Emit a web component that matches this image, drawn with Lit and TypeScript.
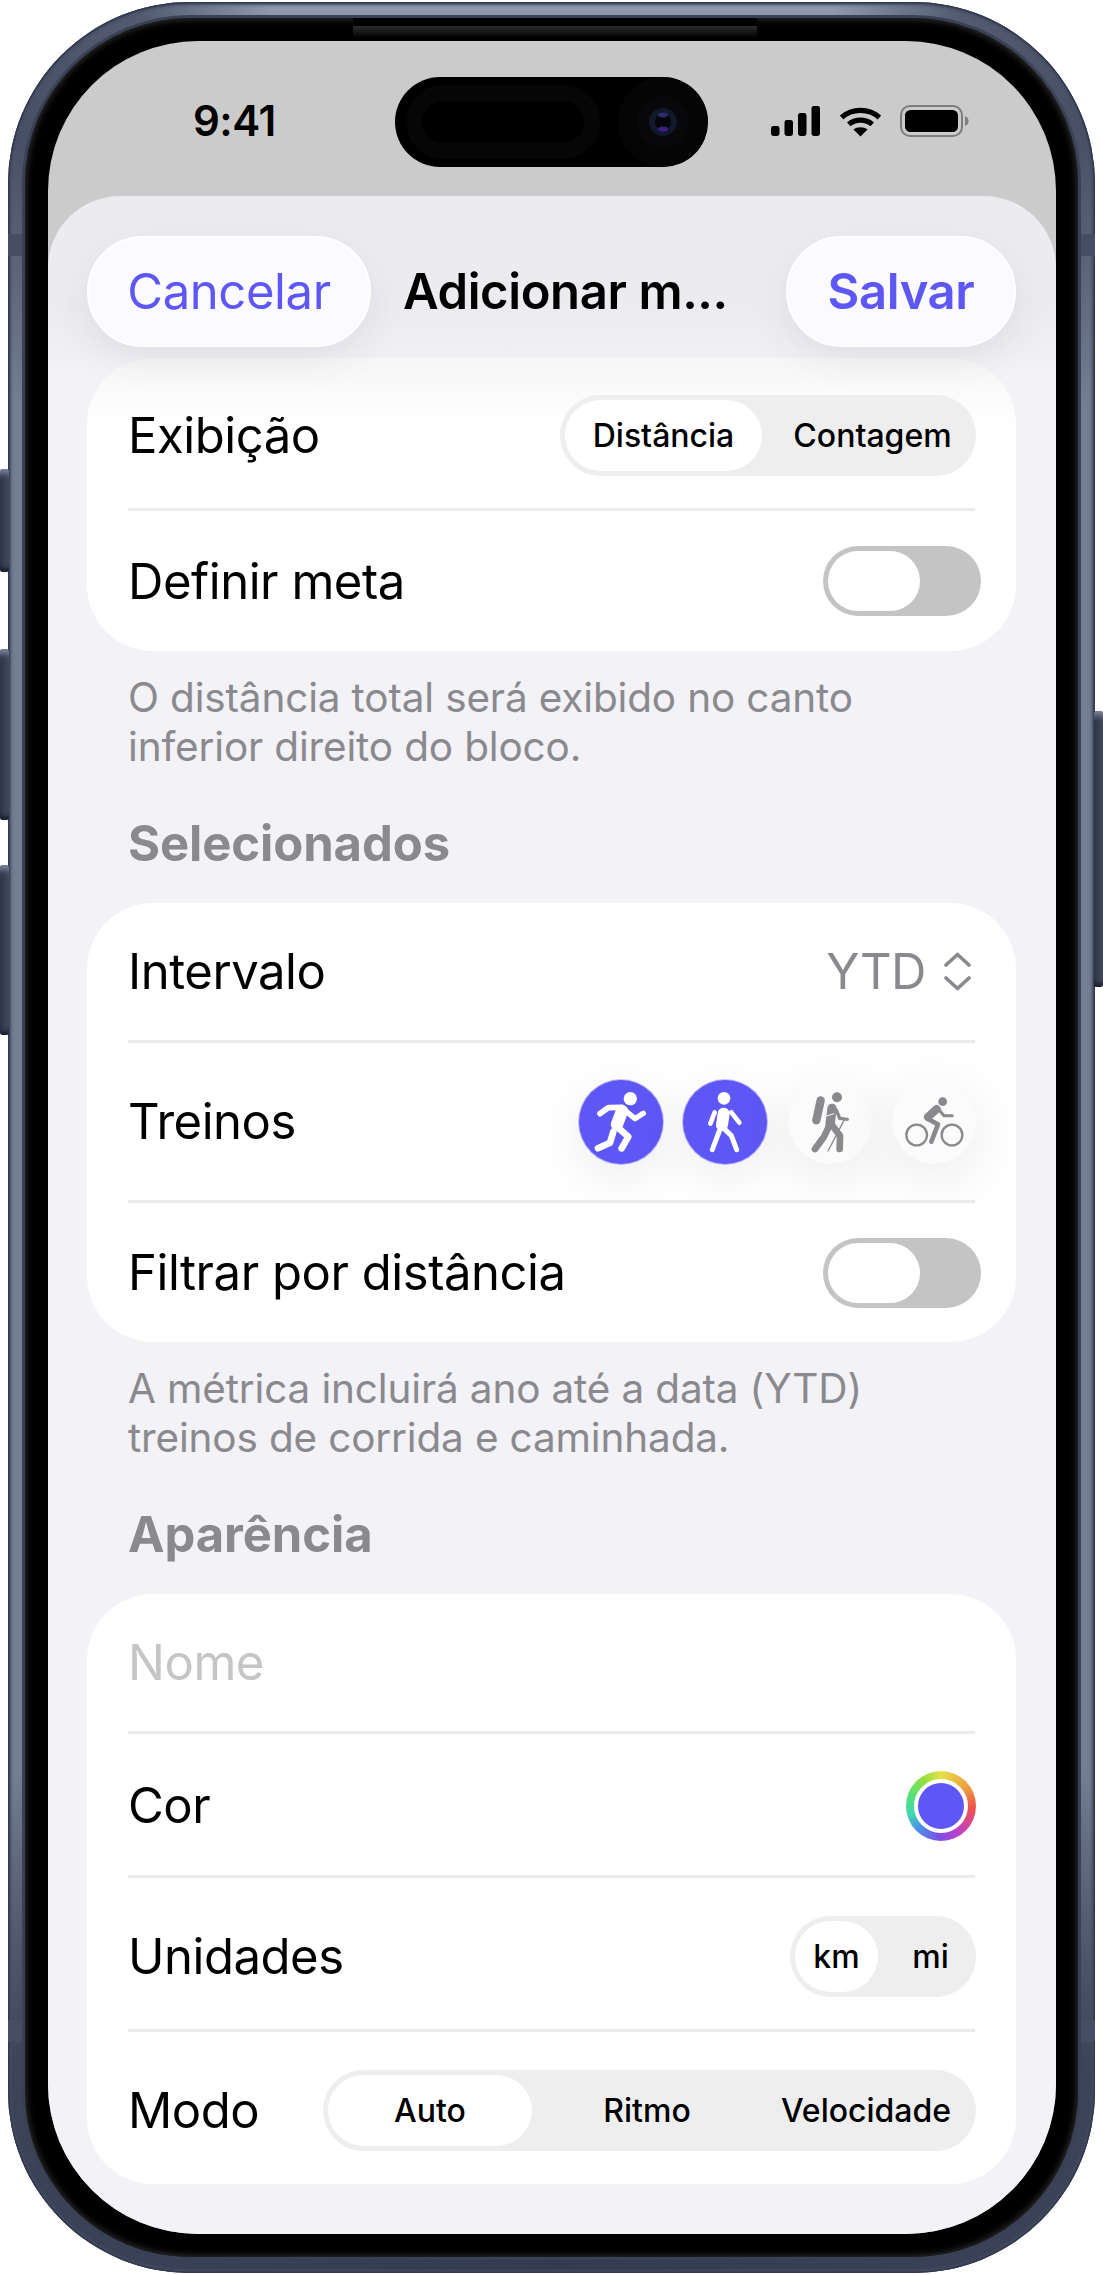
import { LitElement, html, css, svg } from "lit";
import { customElement } from "lit/decorators.js";

const runIcon = svg`<svg class="ic" viewBox="12 15 252 252"><g fill="none" stroke="#fff" stroke-linecap="round" stroke-linejoin="round">
<circle cx="166" cy="71" r="20" fill="#fff" stroke="none"/>
<path d="M141 108 L126 148" stroke-width="37"/>
<path d="M75 116 L100 98 L140 97" stroke-width="17"/>
<path d="M150 106 L180 131 L205 115" stroke-width="16"/>
<path d="M126 155 L160 185 L140 220" stroke-width="20"/>
<path d="M115 170 L105 203 L69 220" stroke-width="20"/></g></svg>`;

const walkIcon = svg`<svg class="ic" viewBox="325 15 252 252"><g fill="none" stroke="#fff" stroke-linecap="round" stroke-linejoin="round">
<circle cx="448" cy="70" r="19" fill="#fff" stroke="none"/>
<path d="M447 116 L442 150" stroke-width="36"/>
<path d="M420 112 L407 146" stroke-width="14"/>
<path d="M470 112 L494 143" stroke-width="14"/>
<path d="M434 168 L413 224" stroke-width="15"/>
<path d="M442 155 L470 182 L486 224" stroke-width="15"/></g></svg>`;

const hikeIcon = svg`<svg class="ic" viewBox="20 15 252 252"><g fill="none" stroke="#8a8a8e" stroke-linecap="round" stroke-linejoin="round">
<circle cx="167" cy="67" r="15" fill="#8a8a8e" stroke="none"/>
<path d="M118 76 L105 136" stroke-width="25"/>
<path d="M152 100 L146 150" stroke-width="28"/>
<path d="M165 105 L175 130 L198 133" stroke-width="10"/>
<path d="M188 136 L140 228" stroke-width="4"/>
<path d="M145 150 L128 185 L101 222" stroke-width="20"/>
<path d="M152 150 L176 182 L175 222" stroke-width="20"/>
<path d="M126 126 L158 116" stroke="#fafafa" stroke-width="3"/></g></svg>`;

const bikeIcon = svg`<svg class="ic" viewBox="334 15 252 252"><g fill="none" stroke="#8a8a8e" stroke-linecap="round" stroke-linejoin="round">
<circle cx="486" cy="80" r="13" fill="#8a8a8e" stroke="none"/>
<circle cx="408" cy="180" r="31" stroke-width="7"/>
<circle cx="514" cy="180" r="31" stroke-width="7"/>
<path d="M468 102 L442 126" stroke-width="24"/>
<path d="M475 104 L490 122 L515 122" stroke-width="9"/>
<path d="M442 132 L472 148 L452 200" stroke-width="14"/></g></svg>`;

const chevrons = svg`<svg class="chev" viewBox="0 0 27 39"><path d="M2 13 L13.5 2.5 L25 13 M2 26 L13.5 36.5 L25 26" fill="none" stroke="#8a8a8e" stroke-width="3.6" stroke-linecap="round" stroke-linejoin="round"/></svg>`;

const signal = svg`<svg class="sig" viewBox="0 0 49 30" fill="#000"><rect x="0" y="20" width="8.5" height="10" rx="2.4"/><rect x="13.5" y="14" width="8.5" height="16" rx="2.4"/><rect x="27" y="7" width="8.5" height="23" rx="2.4"/><rect x="40.5" y="0" width="8.5" height="30" rx="2.4"/></svg>`;
const wifi = svg`<svg class="wifi" viewBox="0 0 43 31" fill="none" stroke="#000" stroke-width="5.2"><path d="M2.6 11.5 C13 2 30 2 40.4 11.5"/><path d="M9.8 18.4 C16 12.6 27 12.6 33.2 18.4"/><path d="M21.5 30.5 L14.5 23.6 C18 20.4 25 20.4 28.5 23.6 Z" fill="#000" stroke="none"/></svg>`;
const battery = svg`<svg class="bat" viewBox="0 0 69 32"><rect x="1" y="1" width="61" height="30" rx="9" fill="none" stroke="#7c7c7c" stroke-width="2"/><rect x="5" y="5" width="53" height="22" rx="5.5" fill="#000"/><path d="M65 11 C67.5 12 68.5 14 68.5 16 C68.5 18 67.5 20 65 21 Z" fill="#7c7c7c"/></svg>`;
const island = svg`<svg class="cam" viewBox="0 0 313 90"><rect x="19" y="16" width="178" height="58" rx="29" fill="none" stroke="#060606" stroke-width="16"/><circle cx="268" cy="45" r="45" fill="#050505"/><circle cx="268" cy="45" r="26" fill="#08080a"/><circle cx="268" cy="45" r="14" fill="#10182a"/><circle cx="268" cy="45" r="8" fill="#05060a"/><ellipse cx="268" cy="38" rx="5" ry="2.4" fill="#2b2a6a"/><ellipse cx="268" cy="52" rx="5" ry="2.6" fill="#3a1e86"/></svg>`;

@customElement("app-root")
export class AppRoot extends LitElement {
  static styles = css`
    :host { display: block; width: 1103px; height: 2275px; background: #fff; font-family: Inter, "Liberation Sans", sans-serif; color: #000; overflow: hidden; }
    * { box-sizing: border-box; }
    .stage { padding: 2px 8px; height: 2275px; }
    .frame { position: relative; height: 2271px; border-radius: 182px; padding: 16px 17px; background: conic-gradient(#8e98ae 0deg, #8e98ae 14deg, #525b70 20deg, #485066 28deg, #737d94 36deg, #737d94 140deg, #3c4459 150deg, #343b50 180deg, #3c4459 210deg, #737d94 220deg, #737d94 324deg, #485066 332deg, #525b70 340deg, #8e98ae 346deg, #8e98ae 360deg); box-shadow: inset 0 0 0 1.5px #333a4d, inset 0 0 3px 3px #434c61; }
    .btn { position: absolute; width: 9px; background: linear-gradient(90deg, #2e3446, #424a5e); border-radius: 3px; box-shadow: inset 0 10px 6px -6px #7e88a0, inset 0 -8px 5px -5px #171b28; }
    .b1 { left: -8px; top: 467px; height: 103px; }
    .b2 { left: -8px; top: 647px; height: 171px; }
    .b3 { left: -8px; top: 863px; height: 170px; }
    .b4 { right: -8px; top: 709px; height: 276px; }
    .band { position: absolute; width: 17px; height: 22px; background: #454e64; }
    .bl1 { left: 0; top: 232px; } .br1 { right: 0; top: 232px; } .bl2 { left: 0; top: 2018px; } .br2 { right: 0; top: 2018px; }
    .bezel { position: relative; height: 2239px; border-radius: 165px; padding: 23px 22px 23px 23px; background: #000; box-shadow: 0 0 0 3px #3a4154, inset 0 0 7px 1px #333; }
    .speaker { position: absolute; left: 328px; top: 0; width: 404px; height: 8px; background: #000; border-radius: 0 0 8px 8px; }
    .glow { position: absolute; left: 328px; width: 404px; top: 8px; height: 12px; background: linear-gradient(#2c2c2c, #000); }
    .screen { position: relative; height: 2193px; border-radius: 150px; overflow: hidden; background: #cbcbcb; display: flex; flex-direction: column; }
    .status { height: 155px; flex: none; display: grid; grid-template-columns: 347px 313px 348px; }
    .time { padding: 60px 0 0 145px; font-size: 42px; line-height: 40px; font-weight: 600; letter-spacing: -0.5px; }
    .island { margin-top: 36px; height: 90px; border-radius: 45px; background: #000; overflow: hidden; }
    .cam { display: block; width: 313px; height: 90px; }
    .icons { padding: 65px 0 0 63px; display: flex; align-items: flex-start; }
    .sig { width: 49px; height: 30px; margin-right: 19px; }
    .wifi { width: 43px; height: 31px; margin-right: 18px; }
    .bat { width: 69px; height: 32px; margin-top: -1px; }
    .sheet { flex: 1; border-radius: 72px 72px 0 0; padding: 40px 40px 0 39px; background: linear-gradient(180deg, #ebebf0 0, #ebebf0 110px, #eeeef3 150px, #f2f2f7 175px); }
    .nav { display: flex; align-items: center; justify-content: space-between; height: 111px; margin-bottom: 11px; }
    .pill { height: 111px; border-radius: 56px; background: #fbfaff; border: 2px solid #fff; color: #5e57f5; display: flex; align-items: center; justify-content: center; font-size: 49px; letter-spacing: -0.4px; box-shadow: 0 14px 36px rgba(60,60,80,.08); }
    .cancel { width: 284px; }
    .save { width: 230px; font-weight: 600; }
    .title { flex: 1; padding-left: 32px; font-size: 49px; font-weight: 600; letter-spacing: -0.4px; white-space: nowrap; }
    .card { background: #fff; border-radius: 66px; overflow: hidden; }
    .first { background: linear-gradient(180deg, #f6f6f6 0, #fafafa 30px, #fff 70px); }
    .row { display: flex; align-items: center; justify-content: space-between; padding: 0 40px 0 41px; font-size: 49px; letter-spacing: -0.45px; white-space: nowrap; }
    .sep { height: 3px; margin: 0 41px; background: #ebebeb; }
    .r150 { height: 150px; padding-top: 5px; }
    .r141 { height: 140px; }
    .r137 { height: 137px; }
    .r158 { height: 157px; overflow: hidden; }
    .r139 { height: 139px; }
    .r142 { height: 141px; padding-top: 2px; }
    .r152 { height: 151px; padding-top: 6px; }
    .r153 { height: 152px; padding-top: 5px; }
    .seg { display: flex; height: 81px; padding: 5px; border-radius: 41px; background: #eeeeee; font-size: 32px; font-weight: 450; letter-spacing: 0; }
    .opt { display: flex; align-items: center; justify-content: center; border-radius: 36px; }
    .on { background: #fff; font-weight: 550; }
    .seg1 { width: 416px; } .seg1 .on { width: 197px; } .seg1 .off { flex: 1; padding-left: 12px; }
    .seg2 { width: 186px; } .seg2 .on { width: 83px; } .seg2 .off { flex: 1; padding-left: 12px; }
    .seg3 { width: 653px; } .seg3 .on { width: 204px; } .o2 { width: 230px; } .o3 { width: 208px; }
    .toggle { width: 158px; height: 70px; padding: 5px; margin-right: -5px; border-radius: 35px; background: #c4c4c4; }
    .knob { width: 92px; height: 60px; border-radius: 30px; background: #fff; }
    .foot { margin: 22px 41px 0; font-size: 40.5px; line-height: 49px; color: #8a8a8e; letter-spacing: -0.16px; white-space: nowrap; }
    .head { margin: 48px 41px 34px; font-size: 49px; line-height: 50px; font-weight: 700; color: #8a8a8e; letter-spacing: -0.1px; }
    .val { display: flex; align-items: center; gap: 18px; color: #8a8a8e; margin-right: 5px; }
    .chev { width: 27px; height: 39px; }
    .dots { display: flex; gap: 20.5px; }
    .dot { width: 84px; height: 84px; border-radius: 50%; flex: none; }
    .dot.sel { background: #5e57f5; box-shadow: 0 0 0 1px rgba(94,87,245,.35), 0 14px 50px rgba(0,0,0,.08); }
    .dot.unsel { background: #fbfbfb; box-shadow: 0 14px 60px rgba(0,0,0,.09); }
    .ic { display: block; width: 84px; height: 84px; }
    .ph { color: #c5c5c7; }
    .swatch { width: 70px; height: 70px; border-radius: 50%; padding: 8px; background: conic-gradient(#e6e04a 0deg, #ee9c40 55deg, #ee5050 95deg, #c040c8 145deg, #7a50e8 185deg, #4a90e8 225deg, #40d8b0 255deg, #50e080 285deg, #90e040 325deg, #e6e04a 360deg); }
    .swatch i { display: block; width: 54px; height: 54px; border-radius: 50%; border: 4px solid #fff; background: #5e57f5; }
  `;

  render() {
    const toggle = html`<div class="toggle"><div class="knob"></div></div>`;
    const sep = html`<div class="sep"></div>`;
    return html`<div class="stage"><div class="frame">
      <div class="btn b1"></div><div class="btn b2"></div><div class="btn b3"></div><div class="btn b4"></div>
      <div class="band bl1"></div><div class="band br1"></div><div class="band bl2"></div><div class="band br2"></div>
      <div class="bezel">
        <div class="glow"></div><div class="speaker"></div>
        <div class="screen">
          <div class="status">
            <div class="time">9:41</div>
            <div class="island">${island}</div>
            <div class="icons">${signal}${wifi}${battery}</div>
          </div>
          <div class="sheet">
            <div class="nav">
              <div class="pill cancel">Cancelar</div>
              <div class="title">Adicionar m...</div>
              <div class="pill save">Salvar</div>
            </div>
            <div class="card first">
              <div class="row r150"><span>Exibição</span>
                <div class="seg seg1"><div class="opt on">Distância</div><div class="opt off">Contagem</div></div></div>
              ${sep}
              <div class="row r141"><span>Definir meta</span>${toggle}</div>
            </div>
            <div class="foot">O distância total será exibido no canto<br />inferior direito do bloco.</div>
            <div class="head">Selecionados</div>
            <div class="card">
              <div class="row r137"><span>Intervalo</span><div class="val"><span>YTD</span>${chevrons}</div></div>
              ${sep}
              <div class="row r158"><span>Treinos</span>
                <div class="dots"><div class="dot sel">${runIcon}</div><div class="dot sel">${walkIcon}</div><div class="dot unsel">${hikeIcon}</div><div class="dot unsel">${bikeIcon}</div></div></div>
              ${sep}
              <div class="row r139"><span>Filtrar por distância</span>${toggle}</div>
            </div>
            <div class="foot">A métrica incluirá ano até a data (YTD)<br />treinos de corrida e caminhada.</div>
            <div class="head">Aparência</div>
            <div class="card">
              <div class="row r137"><span class="ph">Nome</span></div>
              ${sep}
              <div class="row r142"><span>Cor</span><div class="swatch"><i></i></div></div>
              ${sep}
              <div class="row r152"><span>Unidades</span>
                <div class="seg seg2"><div class="opt on">km</div><div class="opt off">mi</div></div></div>
              ${sep}
              <div class="row r153"><span>Modo</span>
                <div class="seg seg3"><div class="opt on">Auto</div><div class="opt o2">Ritmo</div><div class="opt o3">Velocidade</div></div></div>
            </div>
          </div>
        </div>
      </div>
    </div></div>`;
  }
}
